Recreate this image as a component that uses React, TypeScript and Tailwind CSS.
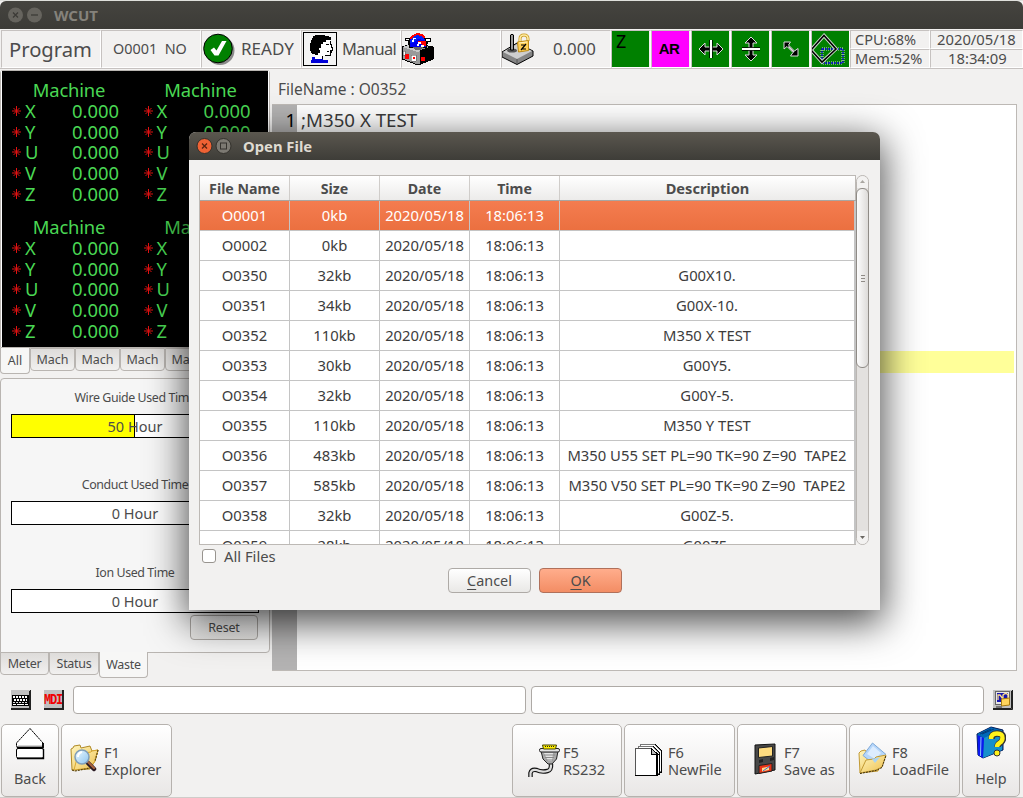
import React from "react";

const axes = ["X", "Y", "U", "V", "Z"];

const files: [string, string, string][] = [
  ["O0001", "0kb", ""],
  ["O0002", "0kb", ""],
  ["O0350", "32kb", "G00X10."],
  ["O0351", "34kb", "G00X-10."],
  ["O0352", "110kb", "M350 X TEST"],
  ["O0353", "30kb", "G00Y5."],
  ["O0354", "32kb", "G00Y-5."],
  ["O0355", "110kb", "M350 Y TEST"],
  ["O0356", "483kb", "M350 U55 SET PL=90 TK=90 Z=90  TAPE2"],
  ["O0357", "585kb", "M350 V50 SET PL=90 TK=90 Z=90  TAPE2"],
  ["O0358", "32kb", "G00Z-5."],
  ["O0359", "28kb", "G00Z5."],
];

const Star = () => (
  <svg width="9" height="10" viewBox="0 0 9 10" fill="none" stroke="#e01212" strokeWidth="1">
    <path d="M4.500 0v10M0 5h9M1.500 2l6 6M7.500 2l-6 6" />
  </svg>
);

const Machine = () => (
  <div className="w-[131.5px] shrink-0">
    <div className="h-[22px] w-[134px] text-center leading-[22px] tracking-[-0.15px]">Machine</div>
    {axes.map((a) => (
      <div key={a} className="flex h-[20.6px] items-center pl-[10px] leading-[20px]">
        <span className="w-[13px]"><Star /></span>
        <span className="w-[20px]">{a}</span>
        <span className="w-[74px] text-right">0.000</span>
      </div>
    ))}
  </div>
);

const Cell = ({ className = "", children }: { className?: string; children?: React.ReactNode }) => (
  <div className={"flex shrink-0 items-center overflow-hidden whitespace-pre border border-t-[#c6c2c0] border-l-[#c6c2c0] border-r-white border-b-white " + className}>{children}</div>
);

const CheckIcon = () => (
  <svg width="32" height="33" viewBox="0 0 32 33">
    <circle cx="17" cy="17.500" r="14.500" fill="#8a8a8a" />
    <circle cx="15" cy="15.500" r="14.300" fill="#008000" stroke="#000" />
    <path d="M7.500 17l3.500-2.500 2.500 3 5.500-9.500h4.500l-8 14.500h-4z" fill="#fff" />
  </svg>
);

const HeadIcon = () => (
  <svg width="34" height="34" viewBox="0 0 34 34" shapeRendering="crispEdges">
    <rect x=".5" y=".5" width="33" height="33" fill="#f4f4f4" stroke="#000" />
    <path d="M16 5h8v1h2v1h1v6h1v4h1v2h-2v2h-1v3h-6v3h-8v-5z" fill="#fff" />
    <path d="M12 3h10v1h4v1h2v3h-5v2h-3v2h-2v4h-2v2h1v3h-2v2h-3v-1H9v-1H8v-2H7v-8h1V8h1V6h1V4h2z" fill="#000" />
    <path d="M27 9v3h1v3h1v3h-2v1h1v1h-1v3h-5M19 24v3" fill="none" stroke="#000" />
    <path d="M23 12h3M26 19h-2" stroke="#000" />
    <path d="M9 25h3v2h8v1h5v3H8v-3h1z" fill="#0000d8" />
  </svg>
);

const RobotIcon = () => (
  <svg width="33" height="33" viewBox="0 0 33 33" shapeRendering="crispEdges">
    <path d="M1 14l12-4 19 4v12L17 32 1 26z" fill="#9a9a9a" stroke="#000" />
    <path d="M19 17l13-4v13l-13 5z" fill="#000" />
    <path d="M1 14l9-3 12 3-5 5z" fill="#c8c8c8" />
    <path d="M8 5H4v2h3v3h3M24 5h5v3h-3v2h-3" fill="#fff" stroke="#000" />
    <path d="M8 14V7l3-4 5-2 6 2 3 5v6z" fill="#0000f0" stroke="#000" />
    <path d="M10 5l4-3h6l3 3v2l-7-1-4 4H9z" fill="#0020ff" />
    <path d="M9 6l3-3 4-2 5 1 3 3" fill="none" stroke="#f00" strokeWidth="2" />
    <path d="M17 8h8v5h-4v-2h-4z" fill="#f00" />
    <path d="M12 5h3v1h-2v3h-2zM17 9h3v2h-2v2h-2zM20 12h3v2h-3z" fill="#fff" />
    <path d="M12 14h10l-2 3h-6z" fill="#666" />
    <path d="M4 21h4v5H4zM20 24h4v4h-4z" fill="#f00" />
    <path d="M10 22h5v6h-5zM2 18h2v4H2z" fill="#fff" stroke="#555" strokeWidth=".5" />
    <path d="M12 24h2v2h-2z" fill="#f00" />
  </svg>
);

const JoystickIcon = () => (
  <svg width="33" height="33" viewBox="0 0 33 33">
    <path d="M1 19l15-9 16 8v5L16 31.500 1 24z" fill="#858585" stroke="#000" />
    <path d="M2 19l14-8 15 7-15 8z" fill="#cecece" />
    <path d="M16 26v5" stroke="#555" />
    <ellipse cx="11" cy="17.500" rx="5" ry="2" fill="#555" />
    <path d="M9.500 2q1.500-1.500 3 0v15h-3z" fill="#999" stroke="#000" />
    <path d="M19 9V6q0-4 4-4t4 4v2" fill="none" stroke="#c79a20" strokeWidth="3" />
    <path d="M19 9V6q0-4 4-4t4 4v2" fill="none" stroke="#ffeaa0" strokeWidth="1.600" />
    <path d="M16.500 9l11-1.500v10l-10 1.500z" fill="#ffcf55" stroke="#bd8a13" />
    <path d="M18 10l8-1" stroke="#fff3c0" />
    <path d="M20 12h4l-3 4h4M20 17l5-6" stroke="#000" strokeWidth="1.200" fill="none" />
  </svg>
);

const HArrows = () => (
  <svg width="26" height="20" viewBox="0 0 26 20">
    <path d="M1 10l6-6v4h5v4H7v4zM25 10l-6-6v4h-5v4h5v4z" fill="#000" stroke="#dcdcdc" strokeWidth="1" />
    <path d="M13 1v18" stroke="#000" strokeWidth="3.500" />
    <path d="M13 1v18" stroke="#fff" strokeWidth="2" />
  </svg>
);

const DiagArrows = () => (
  <svg width="18" height="18" viewBox="0 0 18 18">
    <path d="M2 2h6.500L6.500 5l6 6L16 8.500V16H8.500L11 12.500l-6-6L2 9z" fill="#000" stroke="#ddd" />
    <path d="M6.500 6.500l5.500 5.500" stroke="#ddd" strokeWidth="1.500" />
  </svg>
);

const ShapesIcon = () => (
  <svg width="36" height="36" viewBox="0 0 36 36">
    <rect x="10" y="18" width="21" height="14" fill="none" stroke="#8abc8a" strokeWidth="3.500" strokeDasharray="1 1" />
    <rect x="10" y="18" width="21" height="14" fill="none" stroke="#0000d0" strokeWidth="1.300" strokeDasharray="2 1" />
    <path d="M12 4.500L24 18 10 31-1 19z" fill="none" stroke="#cfdccf" strokeWidth="3.400" />
    <path d="M12 4.500L24 18 10 31-1 19z" fill="none" stroke="#000" strokeWidth="1.600" />
  </svg>
);

const KeyboardIcon = () => (
  <svg width="20" height="20" viewBox="0 0 20 20" shapeRendering="crispEdges">
    <rect width="20" height="20" fill="#c0c0c0" />
    <path d="M0 19.500h19.500V0M0 18.500h18.500V1" fill="none" stroke="#222" />
    <path d="M1 5h17v11H1z" fill="#000" />
    <path d="M2 7h15" stroke="#fff" strokeWidth="2" strokeDasharray="2 1" />
    <path d="M3 10h13" stroke="#fff" strokeWidth="2" strokeDasharray="2 1" />
    <path d="M2 12.500h15" stroke="#ddd" strokeWidth="1" strokeDasharray="2 1" />
    <path d="M2 14.500h3M6 14.500h7M14 14.500h3" stroke="#fff" />
  </svg>
);

const MdiIcon = () => (
  <div className="flex h-5 w-5 items-center justify-center overflow-hidden border-r-2 border-b-2 border-[#222] bg-[#c0c0c0] font-['Liberation_Mono',monospace] text-[12px] font-bold leading-[18px] tracking-[-1.2px] text-[#f00000]">
    <span className="inline-block translate-y-px scale-y-[1.25]">MDI</span>
  </div>
);

const LockScreenIcon = () => (
  <svg width="20" height="20" viewBox="0 0 20 20">
    <rect width="20" height="20" fill="#c0c0c0" />
    <path d="M0 19.500h19.500V0M0 18.500h18.500V1" fill="none" stroke="#222" />
    <rect x="2.500" y="1.500" width="14" height="13" fill="#e8e8e8" stroke="#666" />
    <rect x="4" y="3" width="11" height="9" fill="#1515b0" />
    <path d="M5 10V5h2l3 4V5q3-3 5 0v3" stroke="#ffe08a" fill="none" strokeWidth="1.300" />
    <path d="M8.500 9l8-1v7l-8 1z" fill="#ffd45c" stroke="#a87a10" />
    <path d="M3 16h6v2H3z" fill="#777" />
  </svg>
);

const BackIcon = () => (
  <svg width="30" height="33" viewBox="0 0 30 33">
    <rect x="1.500" y="21.500" width="27" height="9.500" rx="1.500" fill="#fff" stroke="#000" />
    <path d="M2 31.500h26.500V22" fill="none" stroke="#000" strokeWidth="1.400" />
    <path d="M15 1.500L28 16v3.500q0 1-1 1H3q-1.500 0-1.500-1V16z" fill="#fff" stroke="#000" strokeDasharray="2.500 .5" />
    <path d="M2 20.500h26V16" fill="none" stroke="#000" strokeWidth="1.800" />
    <path d="M3 19h24" stroke="#aaa" />
  </svg>
);

const Gold = () => (
  <defs>
    <linearGradient id="gold" x1="0" y1="0" x2="1" y2="1">
      <stop offset="0" stopColor="#fff6c0" /><stop offset="1" stopColor="#edbf4c" />
    </linearGradient>
    <linearGradient id="ice" x1="0" y1="0" x2="1" y2="1">
      <stop offset="0" stopColor="#eefaff" /><stop offset="1" stopColor="#8cc4f0" />
    </linearGradient>
  </defs>
);

const ExplorerIcon = () => (
  <svg width="30" height="30" viewBox="0 0 30 30">
    <Gold />
    <path d="M2 26L1 5l2-1 1-2 6-1 1 3 9-2 2 5 6-1-3 11-5 8z" fill="url(#gold)" stroke="#b08a26" />
    <path d="M4 26L8 10l13-2 1-1 6-1-3 11-5 7z" fill="url(#gold)" stroke="#d8a830" />
    <path d="M2 26l3 1 15-3M28 6l-3 11" stroke="#5c4610" strokeWidth="1.200" strokeDasharray="2 1" fill="none" />
    <path d="M18 19l6 6" stroke="#2a1a24" strokeWidth="4.500" strokeLinecap="round" />
    <path d="M18 18l6 6" stroke="#a8623c" strokeWidth="2.200" strokeLinecap="round" />
    <circle cx="12" cy="13" r="7" fill="url(#ice)" stroke="#7f9db8" strokeWidth="1.500" />
    <path d="M8 13q0-4 4-5" stroke="#fff" strokeWidth="2" fill="none" />
  </svg>
);

const SerialIcon = () => (
  <svg width="33" height="34" viewBox="0 0 33 34">
    <path d="M2.500 33v-4q1-4 6-3 5 2.500 11 1 4-1 3.500-7" fill="none" stroke="#111" strokeWidth="4.500" />
    <path d="M2.500 33v-4q1-4 6-3 5 2.500 11 1 4-1 3.500-7" fill="none" stroke="#ddd" strokeWidth="2.200" />
    <path d="M13 7h17l-1.500 8-4.500 5h-4l-5-5z" fill="#a8a8a8" stroke="#222" />
    <path d="M16 9h9l-1 8h-4z" fill="#e4e4e4" />
    <path d="M16 11h11M17 13.500h9M18 16h7" stroke="#888" />
    <rect x="11.500" y="4.500" width="20" height="3.500" rx="1.500" fill="#e4e4e4" stroke="#222" />
    <path d="M14.500 1h14l-1 4h-12z" fill="#ffee00" stroke="#444400" />
    <path d="M17 2.500h10" stroke="#222" strokeDasharray="1 1" />
  </svg>
);

const PagesIcon = () => (
  <svg width="28" height="33" viewBox="0 0 28 33" shapeRendering="crispEdges">
    <path d="M5 .5h15l6 6v21H5z" fill="#fff" stroke="#777" />
    <path d="M20.500 .5l6 6v21.500h-3" fill="none" stroke="#000" />
    <path d="M3 2.500h15l6 6v21H3z" fill="#fff" stroke="#777" />
    <path d="M18.500 2.500l6 6v21.500h-3" fill="none" stroke="#000" />
    <path d="M.5 4.500h16l6 6v21H.5z" fill="#fff" stroke="#555" />
    <path d="M16.500 4.500v5.500h6z" fill="#bbb" stroke="#000" />
    <path d="M22 10v21.500H0" fill="none" stroke="#000" strokeWidth="1.500" />
  </svg>
);

const FloppyIcon = () => (
  <svg width="23" height="32" viewBox="0 0 23 32">
    <path d="M1 2l20-1v26L1 31z" fill="#484848" stroke="#111" />
    <path d="M4.500 5l14-1.500v9.500l-14 1.500z" fill="#ffdc80" stroke="#222" />
    <path d="M5 17l4-1v3l-4 1zM16 15l4-1v3l-4 1z" fill="#222" />
    <path d="M5 22.500l13-2V28l-13 2.500z" fill="#e83418" stroke="#222" />
    <path d="M8 25l7-1.500v3.500l-7 1.500z" fill="#ffd98a" />
    <path d="M9 28l7-5" stroke="#3c6ad0" />
  </svg>
);

const LoadIcon = () => (
  <svg width="29" height="33" viewBox="0 0 29 33">
    <Gold />
    <path d="M2 31L1 11l2-2 4-1 2 3 8-1 7 5-4 14z" fill="url(#gold)" stroke="#c29a34" />
    <path d="M14.500 1L28 12.500 17 23 5 13.500z" fill="#b5d6fa" stroke="#7fa9d8" />
    <path d="M15 4l8 7-6 6-8-5z" fill="#dcecff" />
    <path d="M2 31l6-13 8-1 2-2 10-2-4 12-6 3z" fill="url(#gold)" stroke="#c29a34" />
    <path d="M2 31.500l16-3 6-3 4-12" fill="none" stroke="#3a2c0c" strokeDasharray="2 1" />
    <path d="M14 17l8-2-5 6z" fill="#a9d3f3" />
  </svg>
);

const HelpIcon = () => (
  <svg width="30" height="34" viewBox="0 0 30 34">
    <path d="M1 8L15 1l12 3v20L7 32l-5-3z" fill="#0a6fb0" stroke="#001858" />
    <path d="M1.500 8L15 1.500 25 5 8 12z" fill="#0068b8" />
    <path d="M6 8l12-5M4 8L15 3" stroke="#023a78" />
    <path d="M8 12l18-8v20L7 32z" fill="#1690cc" />
    <path d="M1.500 9L8 12 7 32l-5-3z" fill="#0a18f0" />
    <path d="M5 11l-.5 19" stroke="#8ac8ff" />
    <path d="M15.500 13q0-5.500 6-5.500t5.500 4.500q0 3-3 5-2.500 1.500-2.500 4" fill="none" stroke="#333" strokeWidth="6.500" />
    <path d="M15 13q0-5.500 6-5.500t5.500 4.500q0 3-3 5-2.500 1.500-2.500 4" fill="none" stroke="#fff21a" strokeWidth="4.500" />
    <circle cx="21" cy="27" r="3" fill="#fff21a" stroke="#333" />
  </svg>
);

const Tab = ({ active, className = "", children }: { active?: boolean; className?: string; children: React.ReactNode }) => (
  <div className={"flex shrink-0 items-center justify-center overflow-hidden whitespace-nowrap rounded-b-[4px] border border-[#b9b5b1] pt-[2px] " + (active ? "border-t-0 bg-[#f7f7f6] " : "bg-linear-to-b from-[#dedcda] to-[#f1f0ef] ") + className}>{children}</div>
);

const Meter = ({ label, value, fill, className = "" }: { label: string; value: string; fill?: boolean; className?: string }) => (
  <div className={"flex w-[248px] flex-col " + className}>
    <div className="h-[20px] text-center text-[12.4px] leading-[22px] tracking-[-0.4px]">{label}</div>
    <div className="mt-[7px] flex h-[24px] w-[248px] items-center border border-black bg-white">
      <div className={"h-full shrink-0 " + (fill ? "w-[123px] border-r border-black bg-[#ffff00]" : "w-[123px]")} />
      <div className="-ml-[123px] w-[246px] text-center text-[14.5px] leading-[24px]">{value}</div>
    </div>
  </div>
);

const FKey = ({ icon, name, label, className }: { icon: React.ReactNode; name: string; label: string; className: string }) => (
  <div className={"flex h-[73px] shrink-0 items-center rounded-[5px] border border-[#b6b2ae] bg-linear-to-b from-white to-[#e9e7e6] text-[14.6px] leading-[17px] " + className}>
    {icon}
    <div><div>{name}</div><div className="whitespace-nowrap">{label}</div></div>
  </div>
);

const Dialog = () => (
  <div className="absolute left-[189px] top-[132px] flex h-[478px] w-[691px] flex-col rounded-t-[7px] bg-[#f2f1f0] shadow-[0_10px_38px_3px_rgba(0,0,0,0.7)]">
    <div className="flex h-[28px] items-center rounded-t-[7px] bg-linear-to-b from-[#5b574f] to-[#3e3d38] pl-[7px] text-[14.8px] font-bold text-[#dfdbd2]">
      <svg width="38" height="18" viewBox="0 0 38 18">
        <circle cx="8.500" cy="9" r="7.500" fill="#ef6234" stroke="#33312c" />
        <path d="M6 6.500l5 5M11 6.500l-5 5" stroke="#5a2410" strokeWidth="1.300" />
        <circle cx="27.500" cy="9" r="7.500" fill="#7c7972" stroke="#33312c" />
        <rect x="24.500" y="6" width="6" height="6" fill="none" stroke="#35332e" />
      </svg>
      <span className="ml-[9px]">Open File</span>
    </div>
    <div className="ml-[10px] mt-[15px] flex h-[370px]">
      <div className="flex w-[657px] flex-col overflow-hidden border border-[#bdb9b5] border-r-0 bg-white">
        <div className="flex h-[25px] shrink-0 border-b border-[#a9a5a1] bg-linear-to-b from-white to-[#ecebea] text-center text-[14.2px] font-bold leading-[25px] text-[#4c4c4c]">
          <div className="w-[90px] border-r border-[#d0cdca]">File Name</div>
          <div className="w-[90px] border-r border-[#d0cdca]">Size</div>
          <div className="w-[90px] border-r border-[#d0cdca]">Date</div>
          <div className="w-[90px] border-r border-[#d0cdca]">Time</div>
          <div className="w-[296px] border-r border-[#bdb9b5] text-[14.6px]">Description</div>
        </div>
        {files.map(([n, s, d], i) => (
          <div key={n} className={"flex h-[30px] shrink-0 whitespace-pre border-b border-[#c4c4c4] text-center text-[14.8px] leading-[28px] " + (i === 0 ? "bg-linear-to-b from-[#f47c4f] to-[#eb7040] text-white" : "text-[#3c3c3c]")}>
            <div className="w-[90px] border-r border-[#c4c4c4]">{n}</div>
            <div className="w-[90px] border-r border-[#c4c4c4]">{s}</div>
            <div className="w-[90px] border-r border-[#c4c4c4]">2020/05/18</div>
            <div className="w-[90px] border-r border-[#c4c4c4]">18:06:13</div>
            <div className="w-[296px] border-r-2 border-[#c4c4c4]">{d}</div>
          </div>
        ))}
      </div>
      <div className="flex w-[13px] flex-col items-center rounded-[7px] border border-[#bab6b2] bg-[#e3e1df]">
        <div className="flex h-[12px] w-full items-center justify-center rounded-t-[6px] bg-[#f3f2f1]">
          <svg width="5" height="4" viewBox="0 0 5 4"><path d="M0 3h5L2.500 0z" fill="#aaa7a2" /></svg>
        </div>
        <div className="flex h-[180px] w-[13px] shrink-0 flex-col items-center justify-center gap-[2px] rounded-[6px] border border-[#8f8b86] bg-linear-to-r from-[#fdfdfd] to-[#dddbd9]">
          <div className="h-px w-[4px] bg-[#8f8b86]" /><div className="h-px w-[4px] bg-[#8f8b86]" /><div className="h-px w-[4px] bg-[#8f8b86]" />
        </div>
        <div className="mt-auto flex h-[13px] w-full items-center justify-center rounded-b-[6px] bg-[#f3f2f1]">
          <svg width="5" height="4" viewBox="0 0 5 4"><path d="M0 0h5L2.500 3z" fill="#6a6762" /></svg>
        </div>
      </div>
    </div>
    <div className="flex h-[23px] items-start pl-[13px] text-[14.8px] leading-[23px]">
      <div className="mt-[4px] h-[14px] w-[14px] rounded-[3px] border border-[#98948f] bg-white" />
      <span className="ml-[8px]">All Files</span>
    </div>
    <div className="ml-[259px] flex gap-2 text-[14.4px]">
      <div className="flex h-[25px] w-[83px] items-center justify-center rounded-[4px] border border-[#aeaaa6] bg-linear-to-b from-white to-[#e9e8e6]"><span className="underline underline-offset-[3px] decoration-1">C</span>ancel</div>
      <div className="flex h-[25px] w-[83px] items-center justify-center rounded-[4px] border border-[#b0705a] bg-linear-to-b from-[#ffad8c] to-[#f38d64]"><span className="underline underline-offset-[3px] decoration-1">O</span>K</div>
    </div>
  </div>
);

export default function App() {
  return (
    <div className="relative flex h-[798px] w-[1023px] flex-col overflow-hidden bg-[#f2f1f0] font-['Noto_Sans',sans-serif] text-[#4c4c4c]">
      <div className="h-px shrink-0 bg-[#dfe0dc]" />
      <div className="flex h-[28px] shrink-0 items-center rounded-t-[6px] bg-linear-to-b from-[#45443f] to-[#3c3b37] pl-[7px] text-[15px] font-bold text-[#85827b]">
        <svg width="38" height="18" viewBox="0 0 38 18">
          <circle cx="8.500" cy="9" r="7.500" fill="#66645e" />
          <path d="M6 6.500l5 5M11 6.500l-5 5" stroke="#3c3b37" strokeWidth="1.300" />
          <circle cx="27.500" cy="9" r="7.500" fill="#66645e" />
          <path d="M24 9h7" stroke="#3c3b37" strokeWidth="1.300" />
        </svg>
        <span className="ml-[9px]">WCUT</span>
      </div>

      <div className="flex h-[40px] shrink-0 border-b border-[#c6c2c0] pl-px pt-px">
        <Cell className="w-[100px] pl-[7px] text-[20.2px]">Program</Cell>
        <Cell className="w-[100px] pl-[11px] text-[14.4px]">O0001  NO</Cell>
        <Cell className="w-[100px] gap-[6px] pl-[1px] text-[17px]"><CheckIcon />READY</Cell>
        <Cell className="w-[100px] gap-[5px] pl-[1px] text-[16.4px] tracking-[-0.6px]"><HeadIcon />Manual</Cell>
        <Cell className="w-[100px]"><div className="-ml-px"><RobotIcon /></div></Cell>
        <Cell className="w-[110px] text-[16.8px]"><div className="-ml-px"><JoystickIcon /></div><span className="ml-[19px]">0.000</span></Cell>
        <Cell className="w-[40px]"><div className="h-[36px] w-[37px] bg-[#008000] pl-[4px] text-[18px] leading-[20px] text-black">Z</div></Cell>
        <Cell className="w-[40px]"><div className="h-[36px] w-[37px] bg-[#ff00ff] pr-[3px] text-center font-['Liberation_Sans',sans-serif] text-[15px] font-bold leading-[35px] tracking-[-0.5px] text-black">AR</div></Cell>
        <Cell className="w-[40px]"><div className="flex h-[36px] w-[37px] items-center justify-center bg-[#008000]"><HArrows /></div></Cell>
        <Cell className="w-[40px]"><div className="flex h-[36px] w-[37px] items-center justify-center bg-[#008000]"><div className="rotate-90"><HArrows /></div></div></Cell>
        <Cell className="w-[40px]"><div className="flex h-[36px] w-[37px] items-center justify-center bg-[#008000]"><DiagArrows /></div></Cell>
        <Cell className="w-[39px]"><div className="h-[36px] w-[37px] bg-[#008000]"><ShapesIcon /></div></Cell>
        <div className="flex w-[80px] shrink-0 flex-col text-[14.5px]">
          <Cell className="h-[19px] pl-[4px]">CPU:68%</Cell>
          <Cell className="h-[19px] pl-[4px]">Mem:52%</Cell>
        </div>
        <div className="flex w-[93px] shrink-0 flex-col text-[14.8px]">
          <Cell className="h-[19px] pl-[6px]">2020/05/18</Cell>
          <Cell className="h-[19px] pl-[17px]">18:34:09</Cell>
        </div>
      </div>

      <div className="flex h-[609px] shrink-0">
        <div className="flex w-[272px] shrink-0 flex-col">
          <div className="mt-px h-[278px] w-[270px] shrink-0 rounded-t-[3px] border border-[#b9b5b1]">
            <div className="flex h-[276px] flex-wrap content-start border-l border-r border-white bg-black pt-[8px] text-[18.4px] text-[#4ad854]">
              <div className="flex"><Machine /><Machine /></div>
              <div className="mt-[12px] flex"><Machine /><Machine /></div>
            </div>
          </div>
          <div className="flex h-[26px] shrink-0 items-start overflow-hidden text-[12.5px]">
            <Tab active className="h-[26px] w-[30px]">All</Tab>
            <Tab className="h-[23px] w-[45px]">Mach</Tab>
            <Tab className="h-[23px] w-[45px]">Mach</Tab>
            <Tab className="h-[23px] w-[45px]">Mach</Tab>
            <Tab className="h-[23px] w-[45px]">Mach</Tab>
          </div>
          <div className="mt-[4px] h-[275px] w-[270px] shrink-0 rounded-[4px] rounded-bl-none border border-[#b9b5b1] bg-[#f6f6f6] pl-[10px]">
            <Meter className="mt-[8px]" label="Wire Guide Used Time" value="50 Hour" fill />
            <Meter className="mt-[36px]" label="Conduct Used Time" value="0 Hour" />
            <Meter className="mt-[37px]" label="Ion Used Time" value="0 Hour" />
            <div className="ml-[179px] mt-[2px] flex h-[25px] w-[68px] items-center justify-center rounded-[4px] border border-[#aeaaa6] bg-linear-to-b from-white to-[#e9e8e6] pt-px text-[12.5px] tracking-[-0.2px]">Reset</div>
          </div>
          <div className="-mt-px flex shrink-0 items-start text-[12.5px]">
            <Tab className="h-[23px] w-[49px] tracking-[-0.3px]">Meter</Tab>
            <Tab className="h-[23px] w-[50px] tracking-[-0.3px]">Status</Tab>
            <Tab active className="h-[26px] w-[49px] tracking-[-0.3px]">Waste</Tab>
          </div>
        </div>
        <div className="flex w-[745px] shrink-0 flex-col">
          <div className="h-[35px] shrink-0 pl-[6px] pt-[9px] text-[15.5px] leading-[22px]">FileName : O0352</div>
          <div className="flex h-[567px] shrink-0 border border-l-0 border-[#bdb9b5] bg-white">
            <div className="w-[25px] bg-[#b4b3b3] pr-px pt-[4px] text-right text-[18.5px] leading-[22px] text-black">1</div>
            <div className="flex-1 pl-[4px] pr-[2px] pt-[4px] text-[18.7px] leading-[22px] text-[#3c3c3c]">
              <div className="h-[22px]">;M350 X TEST</div>
              <div className="-ml-[4px] mt-[220px] h-[22px] bg-[#ffff99]" />
            </div>
          </div>
        </div>
      </div>

      <div className="flex h-[46px] shrink-0 items-start pl-[11px] pt-[8px]">
        <div className="mt-[4px]"><KeyboardIcon /></div>
        <div className="ml-[13px] mt-[4px]"><MdiIcon /></div>
        <div className="ml-[9px] h-[28px] w-[453px] rounded-[4px] border border-[#aeaaa6] bg-white" />
        <div className="ml-[5px] h-[28px] w-[453px] rounded-[4px] border border-[#aeaaa6] bg-white" />
        <div className="ml-[9px] mt-[4px]"><LockScreenIcon /></div>
      </div>

      <div className="flex h-[73px] shrink-0 pl-px">
        <div className="flex w-[58px] flex-col items-center rounded-[5px] border border-[#b6b2ae] bg-linear-to-b from-white to-[#e9e7e6] pt-[2px] text-[14.4px]"><BackIcon /><div className="mt-[7px] leading-[23px]">Back</div></div>
        <FKey className="ml-[2px] w-[111px] gap-[4px] pl-[8px]" icon={<div className="-mt-[4px]"><ExplorerIcon /></div>} name="F1" label="Explorer" />
        <FKey className="ml-[340px] w-[110px] gap-[2px] pl-[15px]" icon={<SerialIcon />} name="F5" label="RS232" />
        <FKey className="ml-[2px] w-[111px] gap-[5px] pl-[10px]" icon={<PagesIcon />} name="F6" label="NewFile" />
        <FKey className="ml-[2px] w-[110px] gap-[7px] pl-[16px]" icon={<div className="-mt-[4px]"><FloppyIcon /></div>} name="F7" label="Save as" />
        <FKey className="ml-[2px] w-[111px] gap-[5px] pl-[8px]" icon={<div className="-mt-[4px]"><LoadIcon /></div>} name="F8" label="LoadFile" />
        <div className="ml-[2px] flex w-[58px] flex-col items-center rounded-[5px] border border-[#b6b2ae] bg-linear-to-b from-white to-[#e9e7e6] pt-[1px] text-[14.4px]"><HelpIcon /><div className="mt-[7px] leading-[23px]">Help</div></div>
      </div>
      <div className="h-px shrink-0 bg-[#cfccc9]" />
      <Dialog />
    </div>
  );
}
